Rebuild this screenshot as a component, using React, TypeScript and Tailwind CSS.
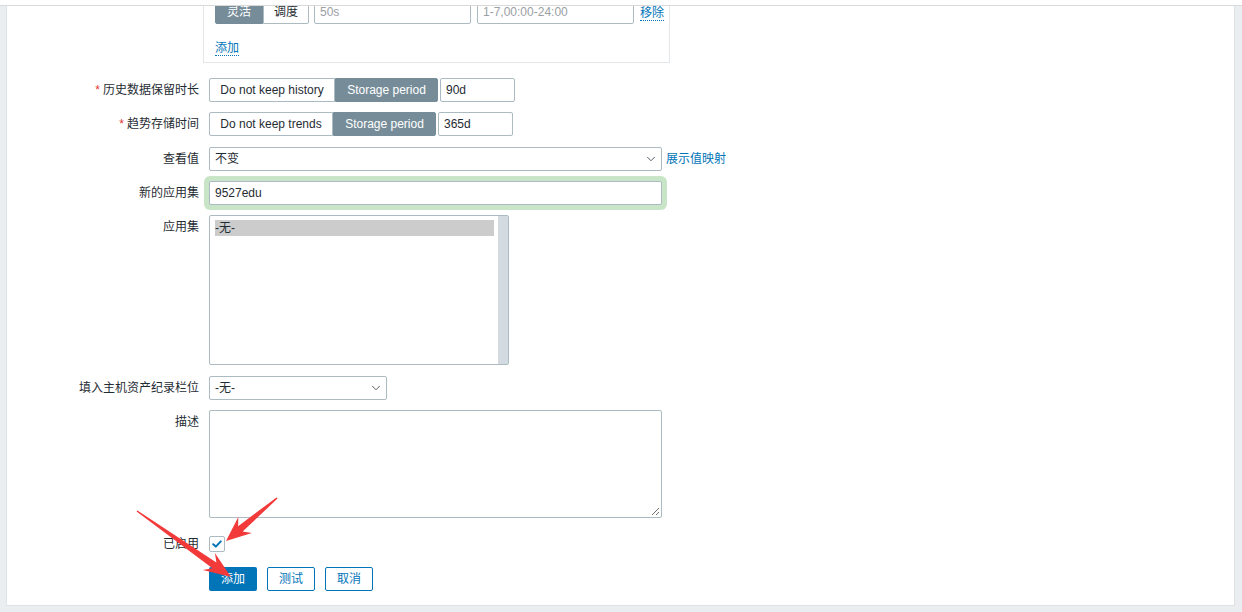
import React from 'react';
import { ChevronDown } from 'lucide-react';

const FONT = "font-['Liberation_Sans','Noto_Sans_CJK_SC',sans-serif]";

const Label = ({ text, required }: { text: string; required?: boolean }) => (
  <div className="w-[192px] shrink-0 h-[24px] leading-[24px] text-right text-[12px] text-[#1f2c33]">
    {required && <span className="text-[#e33734] mr-[3px]">*</span>}
    {text}
  </div>
);

const Segmented = ({ options, active, widths }: { options: string[]; active: number; widths: string[] }) => (
  <div className="flex h-[24px]">
    {options.map((o, i) => (
      <div
        key={o}
        className={
          (i === active
            ? 'bg-[#768d99] border-[#768d99] text-white '
            : 'bg-white border-[#acbbc2] text-[#1f2c33] ') +
          widths[i] +
          ' border h-[24px] leading-[22px] text-center text-[12px] ' +
          (i === 0 ? 'rounded-l-[2px] ' : '') +
          (i === options.length - 1 ? 'rounded-r-[2px]' : '')
        }
      >
        {o}
      </div>
    ))}
  </div>
);

const TextBox = ({ value, width, muted }: { value: string; width: string; muted?: boolean }) => (
  <div
    className={
      width +
      ' h-[24px] border border-[#acbbc2] rounded-[2px] bg-white px-[5px] leading-[22px] text-[12px] ' +
      (muted ? 'text-[#9aa0a4]' : 'text-[#1f2c33]')
    }
  >
    {value}
  </div>
);

const Select = ({ value, width }: { value: string; width: string }) => (
  <div
    className={
      width +
      ' h-[24px] border border-[#acbbc2] rounded-[2px] bg-white pl-[5px] pr-[3px] flex items-center justify-between text-[12px] text-[#1f2c33]'
    }
  >
    <span>{value}</span>
    <ChevronDown size={14} strokeWidth={1.6} className="text-[#4a5257]" />
  </div>
);

const DotLink = ({ text }: { text: string }) => (
  <span className="text-[12px] text-[#0275b8] border-b border-dotted border-[#0275b8] leading-[14px]">{text}</span>
);

type Pt = [number, number];

function arrowPoints(tail: Pt, tip: Pt, headLen: number, headW: number, w0: number, w1: number) {
  const dx = tip[0] - tail[0];
  const dy = tip[1] - tail[1];
  const len = Math.hypot(dx, dy);
  const ux = dx / len;
  const uy = dy / len;
  const nx = -uy;
  const ny = ux;
  const bx = tip[0] - ux * headLen;
  const by = tip[1] - uy * headLen;
  const nb = headLen * 0.25;
  const ix = bx + ux * nb;
  const iy = by + uy * nb;
  const p = [
    [tail[0] + (nx * w0) / 2, tail[1] + (ny * w0) / 2],
    [ix + (nx * w1) / 2, iy + (ny * w1) / 2],
    [bx + (nx * headW) / 2, by + (ny * headW) / 2],
    [tip[0], tip[1]],
    [bx - (nx * headW) / 2, by - (ny * headW) / 2],
    [ix - (nx * w1) / 2, iy - (ny * w1) / 2],
    [tail[0] - (nx * w0) / 2, tail[1] - (ny * w0) / 2],
  ];
  return p.map((q) => q[0].toFixed(1) + ',' + q[1].toFixed(1)).join(' ');
}

export default function App() {
  return (
    <div className={FONT + ' relative w-[1242px] h-[612px] bg-[#ebeef0] overflow-hidden'}>
      <div className="h-[6px] bg-white border-b border-[#d9d9d9]" />
      <div className="pl-[6px] pr-[7px] pb-[6px]">
        <div className="h-[600px] bg-white border-l border-r border-b border-[#dde2e5] overflow-hidden">
          <div className="flex flex-col">
            {/* custom intervals box */}
            <div className="ml-[196px] mt-[-12px] w-[467px] h-[69px] border border-[#e4e7e9] pl-[11px] pt-[5px]">
              <div className="flex items-center">
                <Segmented options={['灵活', '调度']} active={0} widths={['w-[48px]', 'w-[46px]']} />
                <div className="ml-[5px]">
                  <TextBox value="50s" width="w-[157px]" muted />
                </div>
                <div className="ml-[6px]">
                  <TextBox value="1-7,00:00-24:00" width="w-[157px]" muted />
                </div>
                <div className="ml-[6px]">
                  <DotLink text="移除" />
                </div>
              </div>
              <div className="mt-[11px]">
                <DotLink text="添加" />
              </div>
            </div>

            {/* history */}
            <div className="flex items-center mt-[15px]">
              <Label text="历史数据保留时长" required />
              <div className="ml-[10px] flex items-center gap-[2px]">
                <Segmented
                  options={['Do not keep history', 'Storage period']}
                  active={1}
                  widths={['w-[126px]', 'w-[103px]']}
                />
                <TextBox value="90d" width="w-[75px]" />
              </div>
            </div>

            {/* trends */}
            <div className="flex items-center mt-[10px]">
              <Label text="趋势存储时间" required />
              <div className="ml-[10px] flex items-center gap-[2px]">
                <Segmented
                  options={['Do not keep trends', 'Storage period']}
                  active={1}
                  widths={['w-[124px]', 'w-[103px]']}
                />
                <TextBox value="365d" width="w-[75px]" />
              </div>
            </div>

            {/* value map */}
            <div className="flex items-center mt-[11px]">
              <Label text="查看值" />
              <div className="ml-[10px] flex items-center">
                <Select value="不变" width="w-[453px]" />
                <span className="ml-[4px] text-[12px] text-[#0275b8]">展示值映射</span>
              </div>
            </div>

            {/* new application */}
            <div className="flex items-center mt-[10px]">
              <Label text="新的应用集" />
              <div className="ml-[10px]">
                <div className="w-[453px] h-[24px] border border-[#acbbc2] rounded-[2px] bg-white px-[5px] leading-[22px] text-[12px] text-[#1f2c33] shadow-[0_0_0_5px_#c8e5c8]">
                  9527edu
                </div>
              </div>
            </div>

            {/* applications */}
            <div className="flex items-start mt-[10px]">
              <Label text="应用集" />
              <div className="ml-[10px] w-[300px] h-[150px] border border-[#acbbc2] rounded-[2px] bg-white flex">
                <div className="flex-1 pl-[5px] pr-[4px] pt-[4px]">
                  <div className="h-[16px] leading-[16px] bg-[#cccccc] text-[12px] text-[#1f2c33]">-无-</div>
                </div>
                <div className="w-[10px] bg-[#d3dbe0]" />
              </div>
            </div>

            {/* inventory */}
            <div className="flex items-center mt-[11px]">
              <Label text="填入主机资产纪录栏位" />
              <div className="ml-[10px]">
                <Select value="-无-" width="w-[178px]" />
              </div>
            </div>

            {/* description */}
            <div className="flex items-start mt-[10px]">
              <Label text="描述" />
              <div className="ml-[10px] relative w-[453px] h-[108px] border border-[#acbbc2] rounded-[2px] bg-white">
                <svg className="absolute right-[1px] bottom-[1px]" width="9" height="9" viewBox="0 0 9 9">
                  <line x1="8" y1="1" x2="1" y2="8" stroke="#6b6b6b" strokeWidth="1" />
                  <line x1="8" y1="5" x2="5" y2="8" stroke="#6b6b6b" strokeWidth="1" />
                </svg>
              </div>
            </div>

            {/* enabled */}
            <div className="flex items-center mt-[14px]">
              <Label text="已启用" />
              <div className="ml-[10px] w-[16px] h-[16px] border border-[#acbbc2] rounded-[2px] bg-white flex items-center justify-center">
                <svg width="12" height="12" viewBox="0 0 12 12">
                  <path d="M2.2 6.2 L4.8 8.6 L9.8 3.4" fill="none" stroke="#0275b8" strokeWidth="2" strokeLinecap="round" strokeLinejoin="round" />
                </svg>
              </div>
            </div>

            {/* buttons */}
            <div className="flex items-center mt-[11px] ml-[202px] gap-[10px]">
              <div className="w-[48px] h-[24px] rounded-[2px] bg-[#0275b8] text-white text-[12px] leading-[24px] text-center">添加</div>
              <div className="w-[48px] h-[24px] rounded-[2px] border border-[#0275b8] bg-white text-[#0275b8] text-[12px] leading-[22px] text-center">测试</div>
              <div className="w-[48px] h-[24px] rounded-[2px] border border-[#0275b8] bg-white text-[#0275b8] text-[12px] leading-[22px] text-center">取消</div>
            </div>
          </div>
        </div>
      </div>

      {/* annotation arrows */}
      <svg className="absolute left-0 top-0 pointer-events-none" width="1242" height="612">
        <polygon points={arrowPoints([137, 511], [231, 577], 27, 21, 1.5, 7)} fill="#f23a3a" />
        <polygon points={arrowPoints([277, 498], [226, 541], 25, 21, 1.5, 7)} fill="#f23a3a" />
      </svg>
    </div>
  );
}
